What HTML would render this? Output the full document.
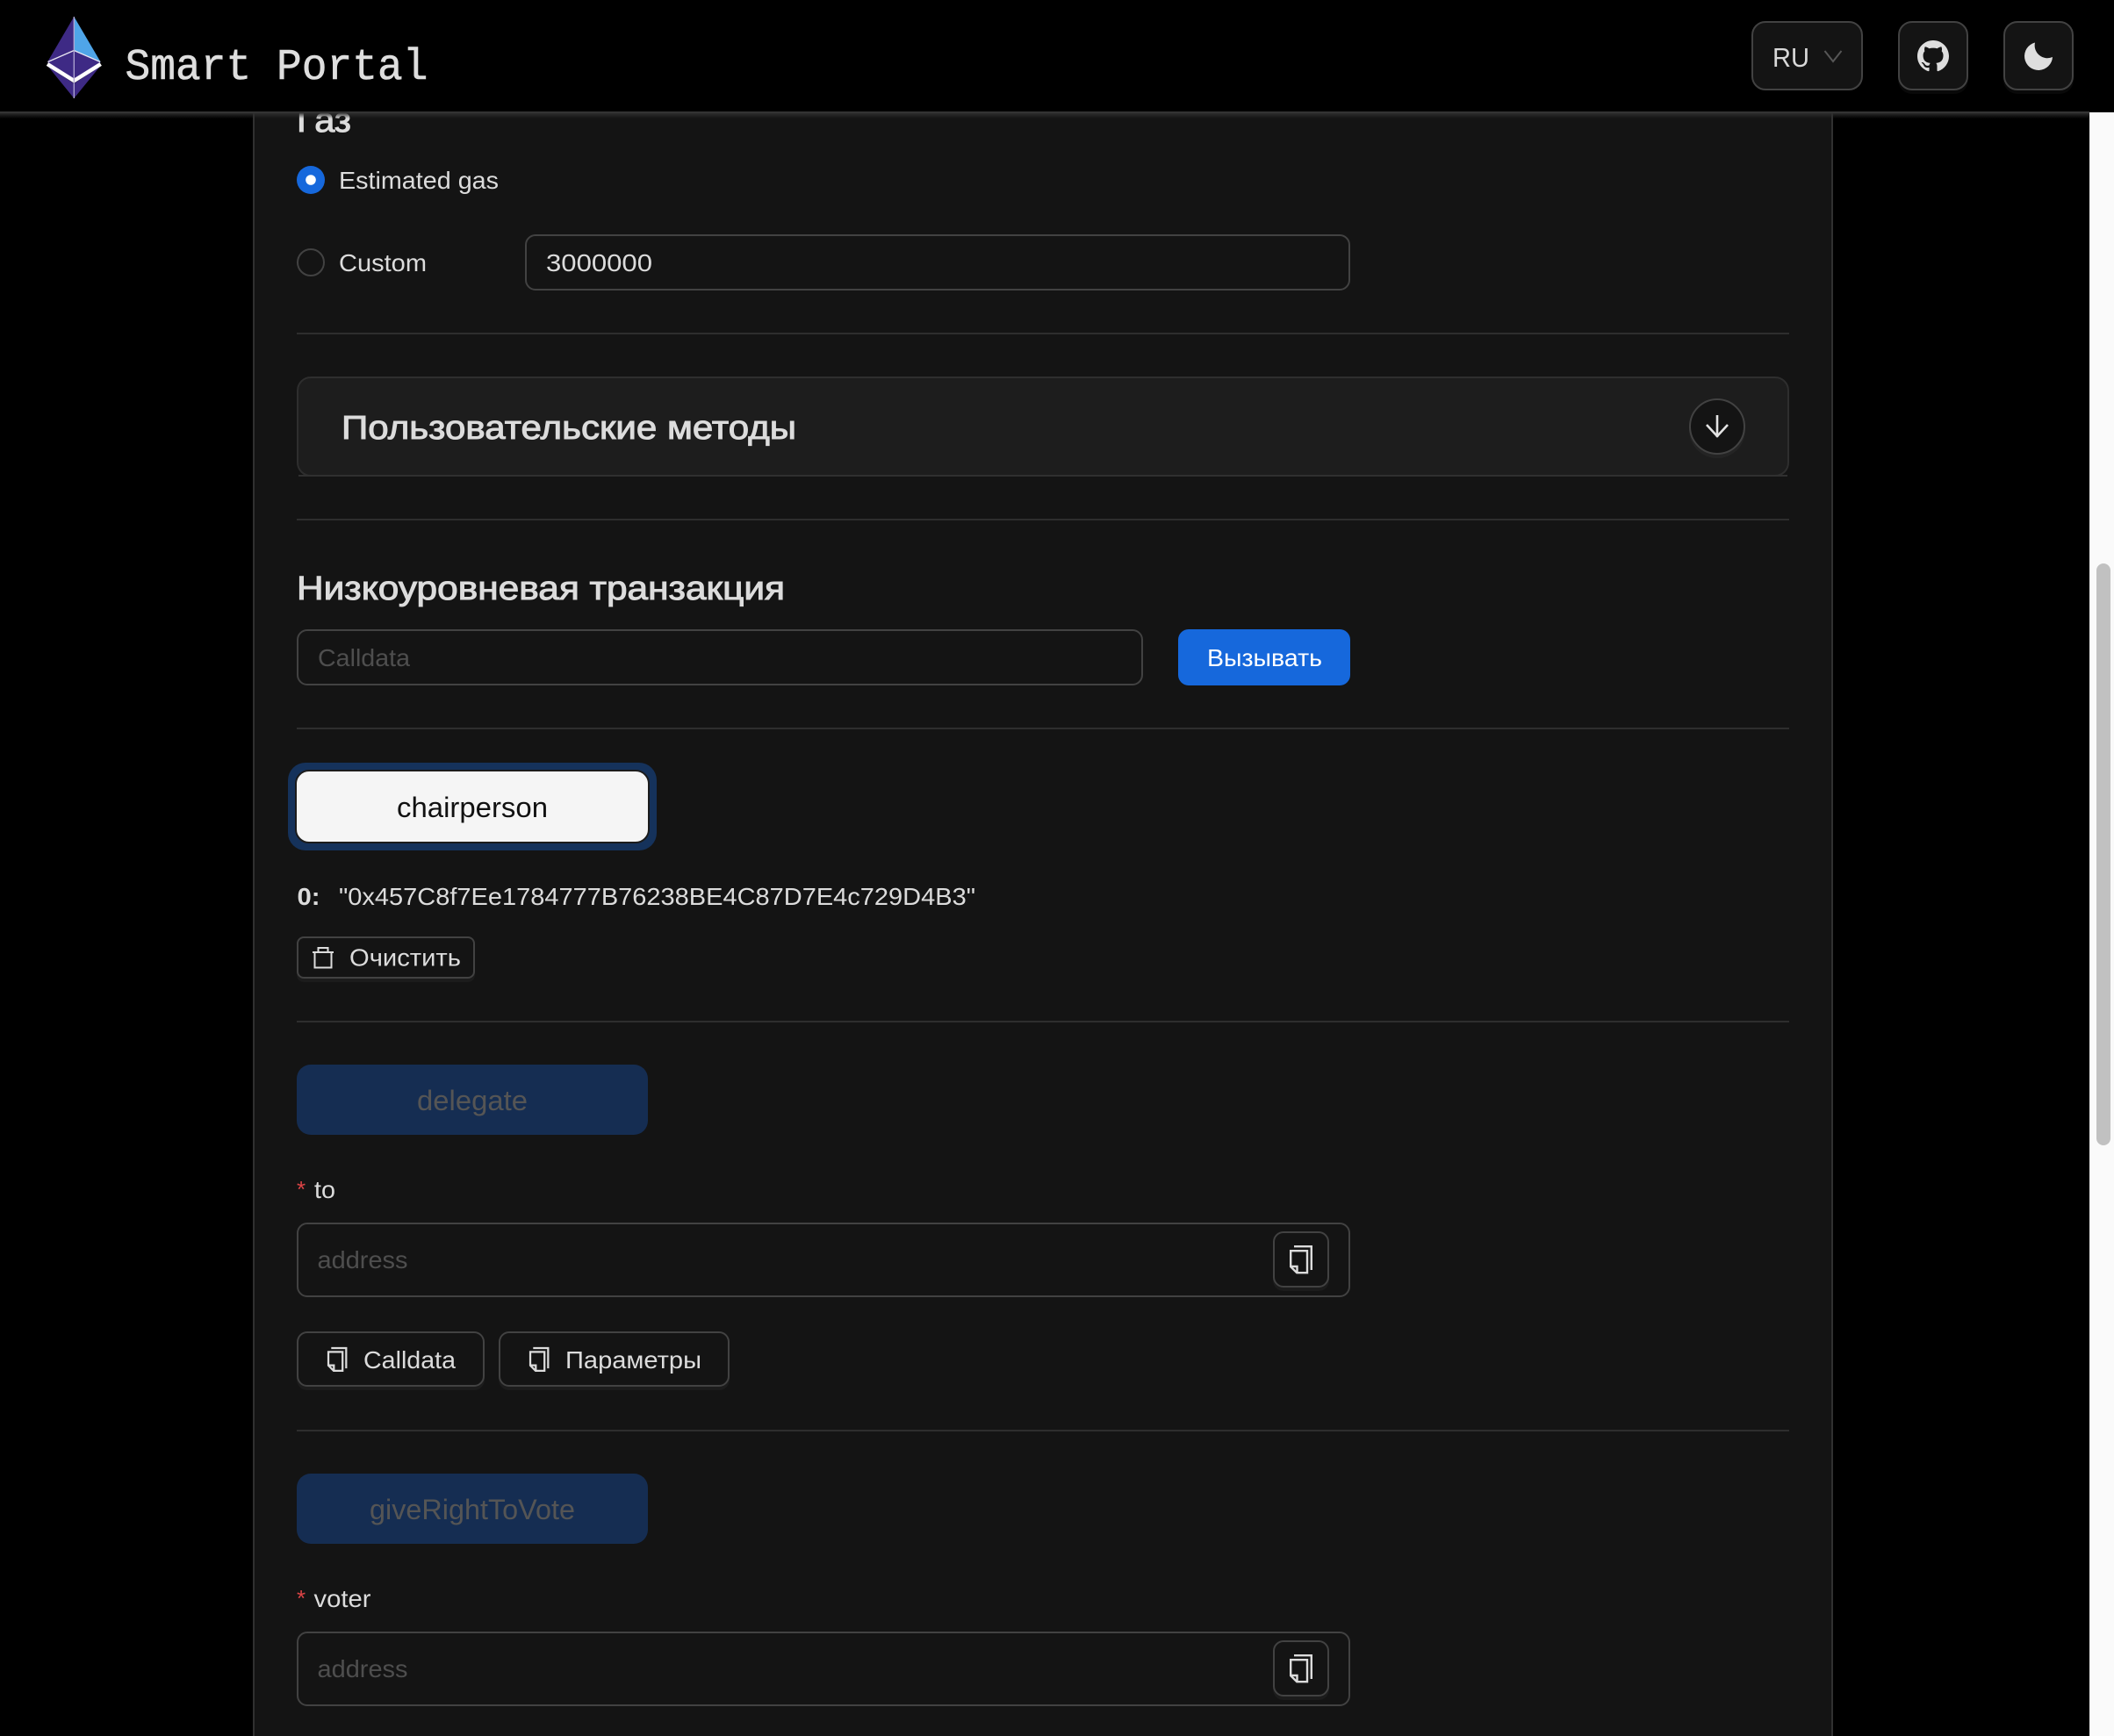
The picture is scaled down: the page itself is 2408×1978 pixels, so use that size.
<!DOCTYPE html>
<html lang="ru">
<head>
<meta charset="utf-8">
<title>Smart Portal</title>
<style>
html,body{margin:0;padding:0;background:#000;width:2408px;height:1978px;overflow:hidden}
body{position:relative;font-family:"Liberation Sans",sans-serif}
.b{position:absolute;box-sizing:border-box}
.in{border:2px solid #424242;border-radius:12px;background:#141414}
.dv{position:absolute;left:338px;width:1700px;height:2px;background:#2e2e2e}
.btn{border:2px solid #424242;background:#141414;box-shadow:0 4px 0 rgba(255,255,255,.035)}
svg{position:absolute;left:0;top:0}
text{font-family:"Liberation Sans",sans-serif;font-size:28px;fill:#dcdcdc}
</style>
</head>
<body>
<!-- scrollbar -->
<div class="b" style="left:2380px;top:128px;width:28px;height:1850px;background:#fafafa;border-left:1px solid #ececec"></div>
<div class="b" style="left:2388px;top:642px;width:16px;height:663px;background:#c1c1c1;border-radius:8px"></div>
<!-- card -->
<div class="b" style="left:288px;top:100px;width:1800px;height:1900px;background:#141414;border:2px solid #303030"></div>
<!-- card boxes -->
<div class="b in" style="left:598px;top:267px;width:940px;height:64px"></div>
<div class="dv" style="top:379px"></div>
<div class="b" style="left:338px;top:429px;width:1700px;height:114px;background:#1d1d1d;border:2px solid #2e2e2e;border-radius:16px"></div>
<div class="b" style="left:340px;top:541px;width:1696px;height:2px;background:#303030"></div>
<div class="b btn" style="left:1924px;top:454px;width:64px;height:64px;border-radius:50%"></div>
<div class="dv" style="top:591px"></div>
<div class="b in" style="left:338px;top:717px;width:964px;height:64px"></div>
<div class="b" style="left:1342px;top:717px;width:196px;height:64px;background:#1668dc;border-radius:12px"></div>
<div class="dv" style="top:829px"></div>
<div class="b" style="left:328px;top:869px;width:420px;height:100px;background:#15325b;border-radius:20px"></div>
<div class="b" style="left:336px;top:877px;width:404px;height:84px;background:#f5f5f5;border:2px solid #1c1c1c;border-radius:16px"></div>
<div class="b btn" style="left:338px;top:1067px;width:203px;height:48px;border-radius:8px"></div>
<div class="dv" style="top:1163px"></div>
<div class="b" style="left:338px;top:1213px;width:400px;height:80px;background:#152d52;border-radius:16px"></div>
<div class="b in" style="left:338px;top:1393px;width:1200px;height:85px"></div>
<div class="b btn" style="left:1450px;top:1403px;width:64px;height:64px;border-radius:12px"></div>
<div class="b btn" style="left:338px;top:1517px;width:214px;height:63px;border-radius:12px"></div>
<div class="b btn" style="left:568px;top:1517px;width:263px;height:63px;border-radius:12px"></div>
<div class="dv" style="top:1629px"></div>
<div class="b" style="left:338px;top:1679px;width:400px;height:80px;background:#152d52;border-radius:16px"></div>
<div class="b in" style="left:338px;top:1859px;width:1200px;height:85px"></div>
<div class="b btn" style="left:1450px;top:1869px;width:64px;height:64px;border-radius:12px"></div>

<!-- card text and icons -->
<svg width="2408" height="1978" viewBox="0 0 2408 1978">
  <text x="338" y="150" style="font-size:39px;stroke:#dcdcdc;stroke-width:1px" textLength="62" lengthAdjust="spacingAndGlyphs">Газ</text>
  <circle cx="354" cy="205" r="16" fill="#1668dc"/>
  <circle cx="354" cy="205" r="5.8" fill="#fff"/>
  <text x="386" y="215" textLength="182" lengthAdjust="spacingAndGlyphs">Estimated gas</text>
  <circle cx="354" cy="299" r="15" fill="#141414" stroke="#424242" stroke-width="2"/>
  <text x="386" y="309" textLength="100" lengthAdjust="spacingAndGlyphs">Custom</text>
  <text x="622" y="309" textLength="121" lengthAdjust="spacingAndGlyphs">3000000</text>
  <text x="389" y="500" style="font-size:38px;stroke:#dcdcdc;stroke-width:1px" textLength="518" lengthAdjust="spacingAndGlyphs">Пользовательские методы</text>
  <g fill="none" stroke="#e4e4e4" stroke-width="2.6">
    <path d="M1956 473V498"/>
    <path d="M1944 484L1956 497L1968 484"/>
  </g>
  <text x="338" y="683" style="font-size:38px;stroke:#dcdcdc;stroke-width:1px" textLength="556" lengthAdjust="spacingAndGlyphs">Низкоуровневая транзакция</text>
  <text x="362" y="759" style="fill:#4e4e4e" textLength="105" lengthAdjust="spacingAndGlyphs">Calldata</text>
  <text x="1375" y="759" style="fill:#fff" textLength="131" lengthAdjust="spacingAndGlyphs">Вызывать</text>
  <text x="452" y="931" style="font-size:32px;fill:#111" textLength="172" lengthAdjust="spacingAndGlyphs">chairperson</text>
  <text x="338.5" y="1031" textLength="26" lengthAdjust="spacingAndGlyphs" style="font-weight:bold">0:</text>
  <text x="386" y="1031" textLength="725" lengthAdjust="spacingAndGlyphs">"0x457C8f7Ee1784777B76238BE4C87D7E4c729D4B3"</text>
  <g fill="none" stroke="#dcdcdc" stroke-width="2">
    <path d="M362.5 1084V1080H373.5V1084"/>
    <path d="M356 1085H380"/>
    <path d="M358.5 1085V1102.500H377.500V1085"/>
  </g>
  <text x="398" y="1100.500" textLength="127" lengthAdjust="spacingAndGlyphs">Очистить</text>
  <text x="475" y="1265" style="font-size:32px;fill:#555" textLength="126" lengthAdjust="spacingAndGlyphs">delegate</text>
  <text x="338" y="1364" style="font-size:26px;fill:#dc4446">*</text>
  <text x="358" y="1365" textLength="24" lengthAdjust="spacingAndGlyphs">to</text>
  <text x="361.5" y="1445" style="fill:#4e4e4e" textLength="103" lengthAdjust="spacingAndGlyphs">address</text>
  <g fill="none" stroke="#dcdcdc" stroke-width="2.4" transform="translate(1469 1419)">
    <path d="M5 1.200H24.800V28"/>
    <path d="M1.200 6.200H20V31.200H8.200L1.200 24.200Z"/>
    <path d="M1.200 24H8.500V31.200"/>
  </g>
  <g fill="none" stroke="#dcdcdc" stroke-width="2.600" transform="translate(373 1535) scale(.86)">
    <path d="M5 1.200H24.800V28"/>
    <path d="M1.200 6.200H20V31.200H8.200L1.200 24.200Z"/>
    <path d="M1.200 24H8.500V31.200"/>
  </g>
  <text x="414" y="1559" textLength="105" lengthAdjust="spacingAndGlyphs">Calldata</text>
  <g fill="none" stroke="#dcdcdc" stroke-width="2.600" transform="translate(603 1535) scale(.86)">
    <path d="M5 1.200H24.800V28"/>
    <path d="M1.200 6.200H20V31.200H8.200L1.200 24.200Z"/>
    <path d="M1.200 24H8.500V31.200"/>
  </g>
  <text x="644" y="1559" textLength="155" lengthAdjust="spacingAndGlyphs">Параметры</text>
  <text x="421" y="1731" style="font-size:32px;fill:#555" textLength="234" lengthAdjust="spacingAndGlyphs">giveRightToVote</text>
  <text x="338" y="1830" style="font-size:26px;fill:#dc4446">*</text>
  <text x="357.5" y="1831" textLength="65" lengthAdjust="spacingAndGlyphs">voter</text>
  <text x="361.5" y="1911" style="fill:#4e4e4e" textLength="103" lengthAdjust="spacingAndGlyphs">address</text>
  <g fill="none" stroke="#dcdcdc" stroke-width="2.4" transform="translate(1469 1885)">
    <path d="M5 1.200H24.800V28"/>
    <path d="M1.200 6.200H20V31.200H8.200L1.200 24.200Z"/>
    <path d="M1.200 24H8.500V31.200"/>
  </g>
</svg>

<!-- header -->
<div class="b" style="left:0;top:0;width:2408px;height:128px;background:#000"></div>
<div class="b" style="left:0;top:127px;width:2380px;height:2px;background:#333"></div>
<div class="b" style="left:0;top:129px;width:2380px;height:6px;background:linear-gradient(rgba(46,46,46,.9),rgba(46,46,46,0))"></div>
<div class="b" style="left:1995px;top:24px;width:127px;height:79px;background:#141414;border:2px solid #424242;border-radius:16px"></div>
<div class="b" style="left:2162px;top:24px;width:80px;height:79px;background:#141414;border:2px solid #424242;border-radius:16px;box-shadow:0 4px 0 rgba(255,255,255,.035)"></div>
<div class="b" style="left:2282px;top:24px;width:80px;height:79px;background:#141414;border:2px solid #424242;border-radius:16px;box-shadow:0 4px 0 rgba(255,255,255,.035)"></div>
<svg width="2408" height="128" viewBox="0 0 2408 128">
  <!-- logo -->
  <path d="M84.300 19L54 70.700L84.300 57.300Z" fill="#3e2a85"/>
  <path d="M84.300 19L114.700 70.700L84.300 57.300Z" fill="#4fa5e8"/>
  <path d="M84.300 57.300L54 71L84.300 90L114.700 71Z" fill="#3e2a85"/>
  <path d="M55 76L84.300 95L113.700 76L84.300 112Z" fill="#3e2a85"/>
  <path d="M54 73L84.300 92L114.700 73" fill="none" stroke="#fff" stroke-width="4.500"/>
  <path d="M54.500 70.500L84.300 57.500L114.200 70.500" fill="none" stroke="#e8e6f2" stroke-width="1.300"/>
  <path d="M84.300 19V112" fill="none" stroke="#b3a9d3" stroke-width="1.300"/>
  <text x="142.500" y="90" style="font-family:'Liberation Mono',monospace;font-size:50px;fill:#dedede;stroke:#dedede;stroke-width:.6px" textLength="345" lengthAdjust="spacingAndGlyphs">Smart Portal</text>
  <!-- RU -->
  <text x="2019" y="76" style="font-size:31px;fill:#d8d8d8" textLength="42" lengthAdjust="spacingAndGlyphs">RU</text>
  <path d="M2078.500 58L2088 70L2097.500 58" fill="none" stroke="#565656" stroke-width="2"/>
  <!-- github -->
  <g transform="translate(2184 46) scale(2.250)">
    <path fill="#dedede" d="M8 0C3.580 0 0 3.580 0 8c0 3.540 2.290 6.530 5.470 7.590.4.070.55-.17.55-.38 0-.19-.01-.82-.01-1.490-2.010.37-2.530-.49-2.690-.94-.09-.23-.48-.94-.82-1.130-.28-.15-.68-.52-.01-.53.63-.01 1.080.58 1.230.82.72 1.210 1.870.87 2.330.66.070-.52.28-.87.51-1.070-1.780-.2-3.640-.89-3.640-3.950 0-.87.31-1.590.82-2.150-.08-.2-.36-1.020.08-2.120 0 0 .67-.21 2.200.82.64-.18 1.320-.27 2-.27.68 0 1.360.09 2 .27 1.530-1.040 2.200-.82 2.200-.82.44 1.100.16 1.920.08 2.120.51.56.82 1.270.82 2.150 0 3.070-1.870 3.750-3.650 3.950.29.25.54.73.54 1.480 0 1.070-.01 1.930-.01 2.200 0 .21.15.46.55.38A8.013 8.013 0 0016 8c0-4.420-3.580-8-8-8z"/>
  </g>
  <!-- moon -->
  <g transform="translate(2306 48)">
    <path fill="#dedede" d="M12 .5A16 16 0 1 0 32 17A14.500 14.500 0 0 1 12 .5Z"/>
  </g>
</svg>
</body>
</html>
